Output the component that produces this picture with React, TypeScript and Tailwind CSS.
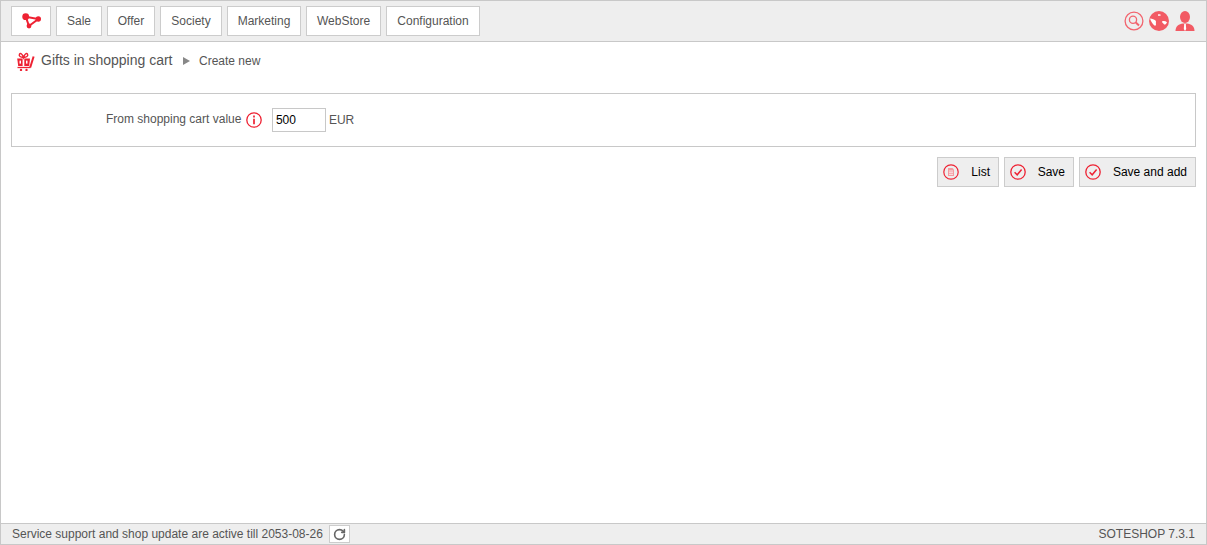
import { RotateCw } from "lucide-react";

const menu = [
  { label: "Sale", width: "w-[46px]" },
  { label: "Offer", width: "w-[48px]" },
  { label: "Society", width: "w-[62px]" },
  { label: "Marketing", width: "w-[74px]" },
  { label: "WebStore", width: "w-[75px]" },
  { label: "Configuration", width: "w-[94px]" },
];

function LogoIcon() {
  return (
    <svg width="20" height="16" viewBox="0 0 20 16" fill="none">
      <path d="M4.7 3.7 L17.3 6 L8 13 Z" stroke="#ee2233" strokeWidth="2" />
      <circle cx="4.7" cy="3.7" r="3.4" fill="#ee2233" />
      <circle cx="17.3" cy="6" r="2.7" fill="#ee2233" />
      <circle cx="8" cy="13" r="2.4" fill="#ee2233" />
    </svg>
  );
}

function GiftCartIcon() {
  return (
    <svg width="20" height="20" viewBox="0 0 20 20" fill="none">
      <path d="M1.2 7.5 H14 L13.2 15 H2.2 Z" fill="#ee2233" />
      <rect x="6.6" y="7.5" width="1.7" height="7.5" fill="#fff" />
      <rect x="3.5" y="9.6" width="1.5" height="3" fill="#fff" />
      <rect x="10" y="9.6" width="1.5" height="3" fill="#fff" />
      <path d="M7.5 6.5 C4.5 6.5 2.5 5 3.5 3.2 C4.5 1.6 6.5 3 7.5 6.5 C8.5 3 10.5 1.6 11.5 3.2 C12.5 5 10.5 6.5 7.5 6.5 Z" stroke="#ee2233" strokeWidth="1.4" />
      <path d="M14.2 16.5 L17.6 5.5" stroke="#ee2233" strokeWidth="2" />
      <path d="M1.5 16.5 H14.5" stroke="#ee2233" strokeWidth="1.3" />
      <circle cx="5" cy="19" r="1.2" fill="#ee2233" />
      <circle cx="10.5" cy="19" r="1.2" fill="#ee2233" />
    </svg>
  );
}

function SearchIcon() {
  return (
    <svg width="20" height="20" viewBox="0 0 20 20" fill="none" stroke="#f2646e">
      <circle cx="10" cy="10" r="8.9" strokeWidth="1.3" />
      <circle cx="9" cy="8.8" r="3.6" strokeWidth="1.3" />
      <path d="M11.8 11.6 L15 14.6" strokeWidth="2" />
    </svg>
  );
}

function GlobeIcon() {
  return (
    <svg width="20" height="20" viewBox="0 0 20 20">
      <circle cx="10" cy="10" r="10" fill="#f25a64" />
      <path d="M1 7.5 C3.5 7.5 5 8.5 6.5 9.5 C7.5 10.5 6.5 12 7 13 C7 14.5 6.5 15 5.5 14.5 C3.5 13 2 10.5 1 7.5 Z" fill="#fff" />
      <path d="M9 3.5 C10 3 11.5 3.2 12 4 C11.2 5 10 5 9 4.7 Z" fill="#fff" />
      <path d="M13 10.5 C14.5 9.7 16.5 10 18 11.2 C17.2 12.8 16 14 15.2 13.4 C14.5 12.2 13 12 13 10.5 Z" fill="#fff" />
    </svg>
  );
}

function UserIcon() {
  return (
    <svg width="20" height="20" viewBox="0 0 20 20">
      <ellipse cx="10" cy="6" rx="5" ry="6" fill="#f25a64" />
      <path d="M0.5 20 C0.5 15 4 13 8 12.5 H12 C16 13 19.5 15 19.5 20 Z" fill="#f25a64" />
      <path d="M9.2 13 H10.8 L11.2 18 L10 20 L8.8 18 Z" fill="#fff" />
    </svg>
  );
}

function ListIcon() {
  return (
    <svg width="16" height="16" viewBox="0 0 16 16" fill="none">
      <circle cx="8" cy="8" r="7.2" stroke="#ee2233" strokeWidth="1.2" />
      <path d="M5 4 H9.5 L11 5.5 V12 H5 Z" fill="#f59aa0" />
      <path d="M6 7 H10 M6 8.7 H10 M6 10.4 H10" stroke="#fff" strokeWidth="0.7" />
    </svg>
  );
}

function CheckIcon() {
  return (
    <svg width="16" height="16" viewBox="0 0 16 16" fill="none" stroke="#ee2233">
      <circle cx="8" cy="8" r="7.2" strokeWidth="1.3" />
      <path d="M4.6 8.2 L7.2 10.8 L11.6 5.6" strokeWidth="1.5" />
    </svg>
  );
}

function ActionButton({ icon, label, width }: { icon: React.ReactNode; label: string; width: string }) {
  return (
    <button className={`flex items-center justify-between h-[30px] pl-[5px] pr-2 bg-[#eeeeee] border border-[#cccccc] text-xs text-black ${width}`}>
      {icon}
      <span>{label}</span>
    </button>
  );
}

export default function App() {
  return (
    <div className="flex flex-col h-[545px] bg-white border border-[#c8c8c8] font-['Liberation_Sans',Arial,sans-serif] text-xs text-[#555555]">
      <header className="flex items-center justify-between h-[41px] shrink-0 pl-[10px] pr-[11px] bg-[#eeeeee] border-b border-[#c8c8c8]">
        <nav className="flex gap-[5px]">
          <a className="flex items-center justify-center w-10 h-[30px] bg-white border border-[#cccccc]">
            <LogoIcon />
          </a>
          {menu.map((item) => (
            <a key={item.label} className={`flex items-center justify-center h-[30px] bg-white border border-[#cccccc] ${item.width}`}>
              {item.label}
            </a>
          ))}
        </nav>
        <div className="flex items-center gap-[5px]">
          <SearchIcon />
          <GlobeIcon />
          <span className="ml-[1px]">
            <UserIcon />
          </span>
        </div>
      </header>

      <main className="flex-1 px-[10px]">
        <div className="flex items-center h-[37px] pl-[5px]">
          <GiftCartIcon />
          <span className="ml-[5px] mb-[2px] text-sm">Gifts in shopping cart</span>
          <svg className="ml-[10px]" width="7" height="8" viewBox="0 0 7 8">
            <path d="M0 0 L7 4 L0 8 Z" fill="#888888" />
          </svg>
          <span className="ml-[9.5px]">Create new</span>
        </div>

        <section className="flex items-center h-[54px] mt-[14px] border border-[#c8c8c8]">
          <label className="ml-[94px] mb-[2px]">From shopping cart value</label>
          <svg className="ml-[5px]" width="16" height="16" viewBox="0 0 16 16" fill="none" stroke="#ee2233">
            <circle cx="8" cy="8" r="7.2" strokeWidth="1.3" />
            <path d="M8 3.6 V5.4 M8 6.8 V12.2" strokeWidth="1.7" />
          </svg>
          <input
            readOnly
            value="500"
            className="w-[54px] h-6 ml-[10px] pl-[2.5px] bg-white border border-[#c8c8c8] text-xs text-black outline-none"
          />
          <span className="ml-[2.5px]">EUR</span>
        </section>

        <div className="flex justify-end gap-[5px] mt-[10px]">
          <ActionButton icon={<ListIcon />} label="List" width="w-[62px]" />
          <ActionButton icon={<CheckIcon />} label="Save" width="w-[70px]" />
          <ActionButton icon={<CheckIcon />} label="Save and add" width="w-[117px]" />
        </div>
      </main>

      <footer className="flex items-center justify-between h-[21px] shrink-0 pl-[11px] pr-[11px] bg-[#eeeeee] border-t border-[#c8c8c8]">
        <div className="flex items-center gap-[6px]">
          <span>Service support and shop update are active till 2053-08-26</span>
          <span className="flex items-center justify-center w-[21px] h-[18px] bg-white border border-[#cccccc]">
            <RotateCw className="w-[13px] h-[13px] text-[#666666]" strokeWidth={3} />
          </span>
        </div>
        <span>SOTESHOP 7.3.1</span>
      </footer>
    </div>
  );
}
